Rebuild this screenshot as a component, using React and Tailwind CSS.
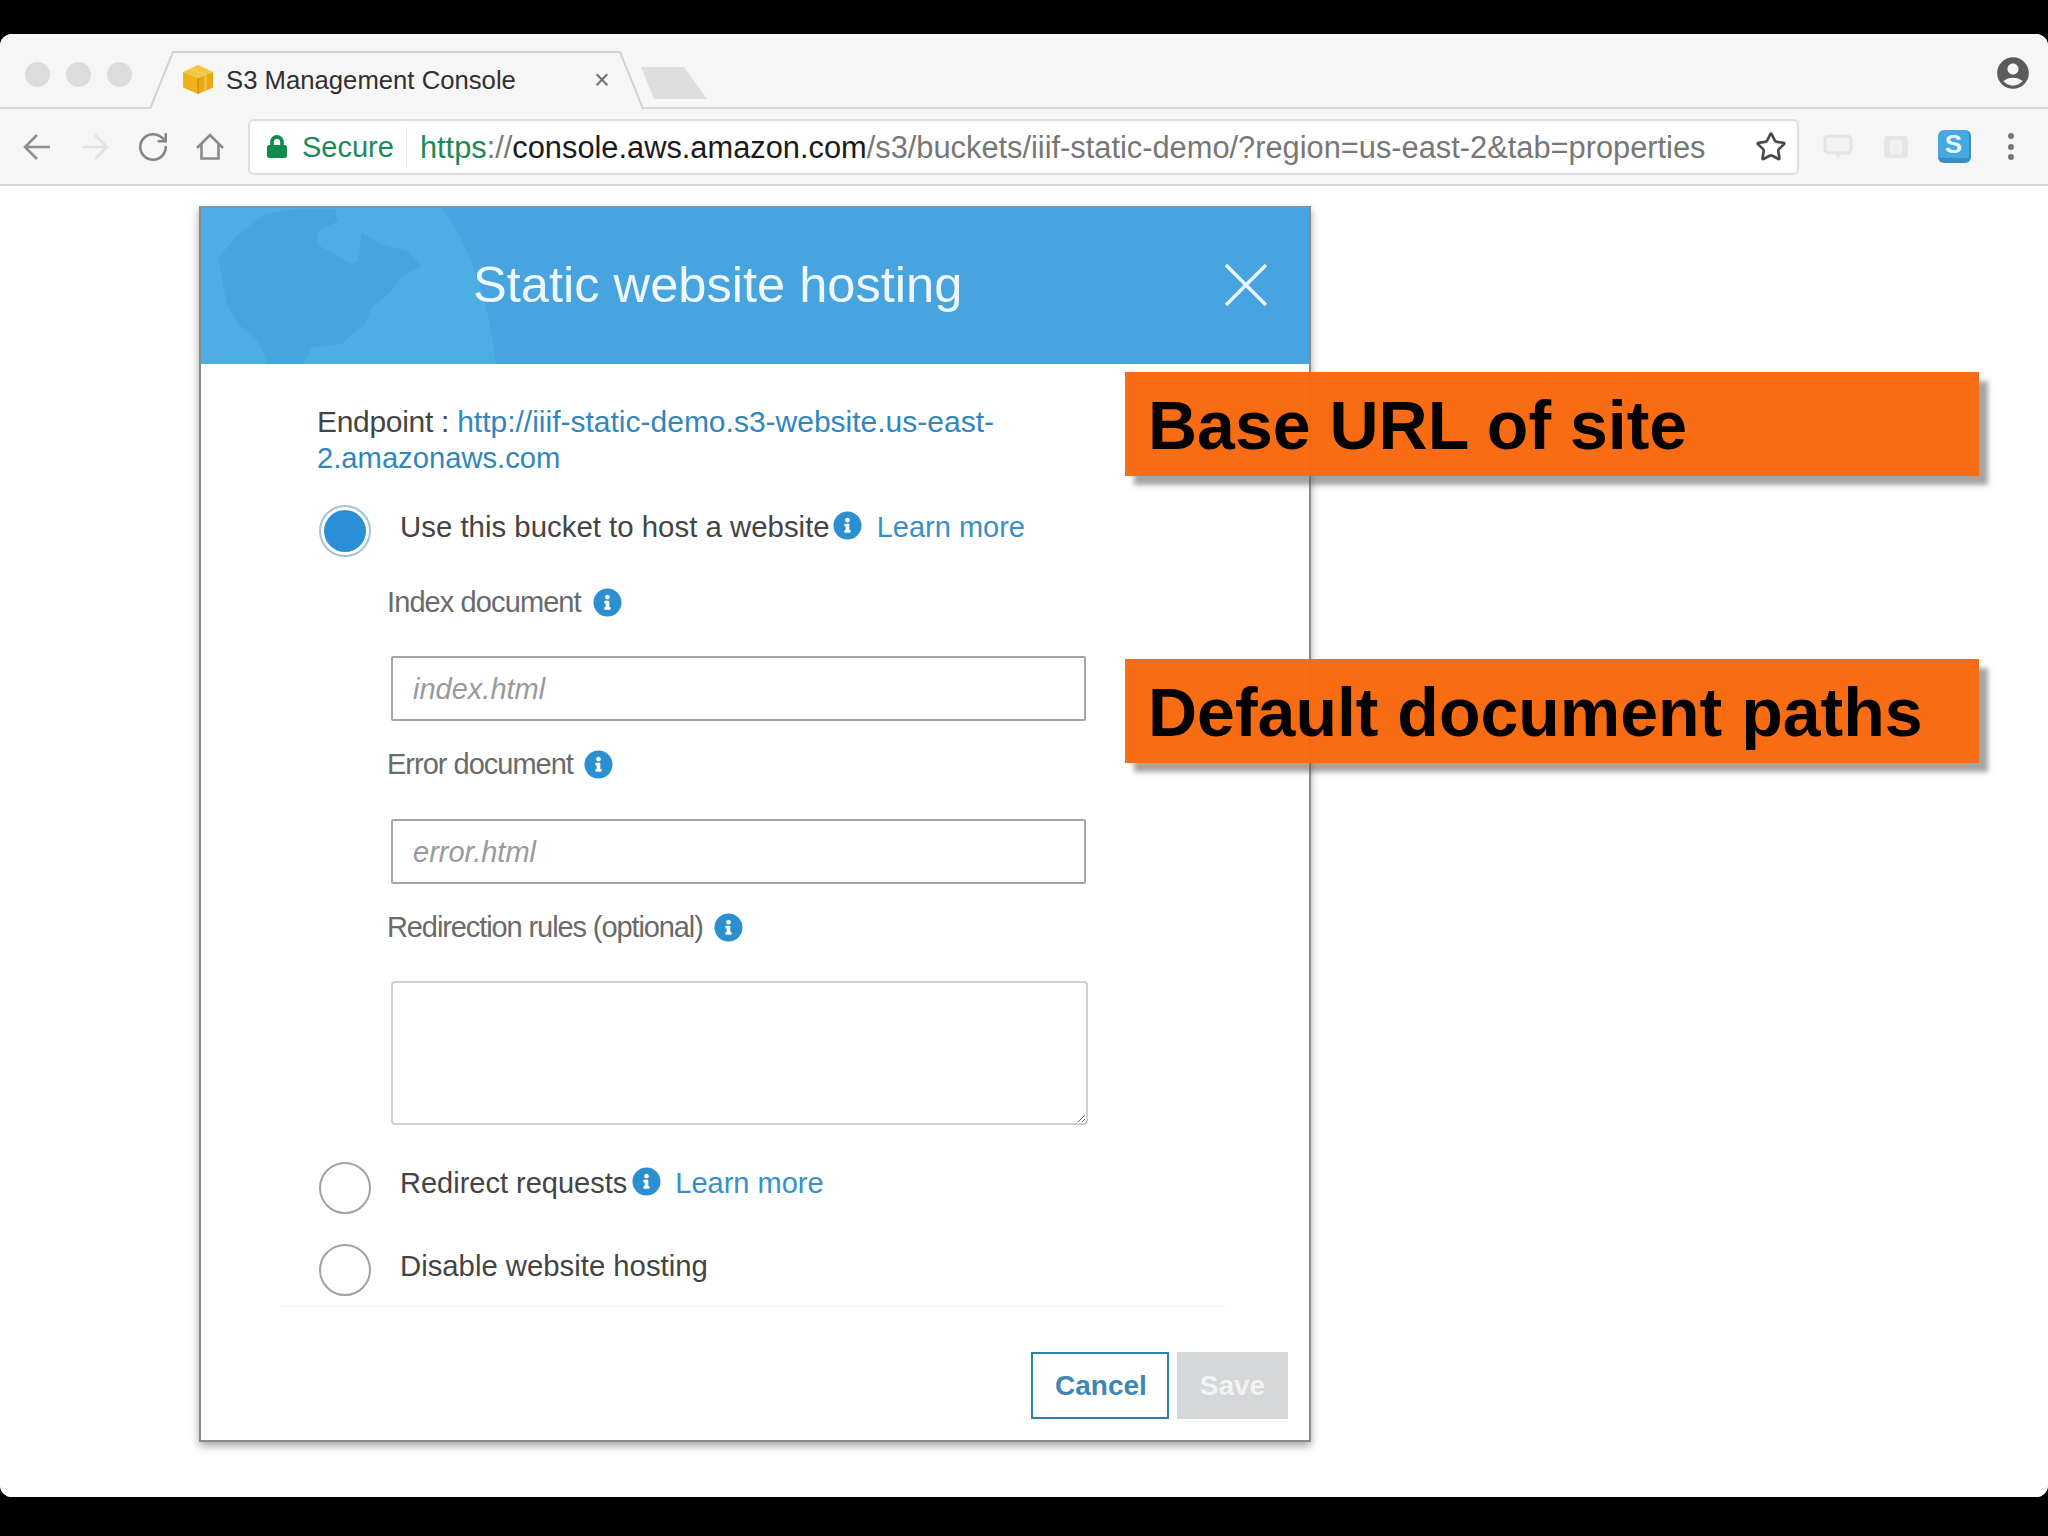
import React from "react";
import { RotateCw, Star } from "lucide-react";
import { FaInfoCircle, FaLock } from "react-icons/fa";
import { MdAccountCircle } from "react-icons/md";

function Info({ className }) {
  return <FaInfoCircle className={`text-[#2b8fd0] w-[29px] h-[29px] shrink-0 ${className || ""}`} />;
}

function Radio({ checked, className }) {
  if (checked) {
    return (
      <div className={`ml-[2px] w-[52px] h-[52px] rounded-full border-2 border-[#a8c5d8] p-[3px] shrink-0 bg-white ${className || ""}`}>
        <div className="w-full h-full rounded-full bg-[#2b8fd6]" />
      </div>
    );
  }
  return <div className={`ml-[2px] w-[52px] h-[52px] rounded-full border-2 border-[#a2a2a2] bg-white shrink-0 ${className || ""}`} />;
}

function Field({ label, labelMt, placeholder, inputMt, tracking, iconMl }) {
  return (
    <>
      <div className={`flex items-center h-[40px] ml-[70px] ${labelMt}`}>
        <span className={`text-[29px] text-[#6a6a6a] whitespace-nowrap ${tracking}`}>{label}</span>
        <Info className={`-mt-[2px] ${iconMl}`} />
      </div>
      {placeholder && (
        <input
          readOnly
          placeholder={placeholder}
          className={`block ml-[74px] w-[695px] h-[65px] border-2 border-[#a5a5a5] rounded-[2px] bg-white pl-[20px] pt-[2px] text-[29px] italic placeholder:text-[#9a9a9a] outline-none ${inputMt}`}
        />
      )}
    </>
  );
}

function Callout({ children, className }) {
  return (
    <div className={`absolute left-[1125px] w-[854px] h-[104px] bg-[#f8680b]/97 shadow-[9px_9px_5px_rgba(90,90,90,0.55)] flex items-center pl-[23px] pt-[2px] text-[68px] font-bold text-black whitespace-nowrap ${className}`}>
      {children}
    </div>
  );
}

export default function App() {
  return (
    <div className="w-[2048px] h-[1536px] bg-black pt-[34px] overflow-hidden font-['Liberation_Sans',Arial,sans-serif]">
      <div className="h-[1463px] rounded-[12px] overflow-hidden bg-white flex flex-col">
        {/* Tab strip */}
        <div className="h-[75px] bg-[#f6f6f6] border-b-2 border-[#d6d6d6] flex items-start shrink-0">
          <div className="flex gap-[16px] ml-[25px] mt-[28px]">
            <div className="w-[25px] h-[25px] rounded-full bg-[#dcdcdc]" />
            <div className="w-[25px] h-[25px] rounded-full bg-[#dcdcdc]" />
            <div className="w-[25px] h-[25px] rounded-full bg-[#dcdcdc]" />
          </div>
          <div className="relative w-[493px] h-[59px] ml-[18px] mt-[17px] flex items-center pl-[33px] shrink-0">
            <svg className="absolute left-0 top-0" width="493" height="59" viewBox="0 0 493 59">
              <path d="M0 59 L1 57 L23 1 L470 1 L492 57 L493 59 Z" fill="#f6f6f6" />
              <path d="M0 58 L23 1 L470 1 L493 58" fill="none" stroke="#d2d2d2" strokeWidth="2" />
            </svg>
            <svg className="relative -mt-[2px]" width="30" height="29" viewBox="0 0 30 29">
              <path d="M15 0 L30 7 L15 13 L0 7 Z" fill="#f3c640" />
              <path d="M0 7 L15 13 L15 29 L1 23 Q0 22.5 0 22 Z" fill="#efb31a" />
              <path d="M30 7 L15 13 L15 29 L29 23 Q30 22.5 30 22 Z" fill="#e9a90f" />
              <path d="M6 4.2 L21 10.4 L21 27 L24 25.7 L24 9.2 L9 2.8 Z" fill="#f7d15a" fillOpacity="0.55" />
              <path d="M15 13 L15 29" stroke="#cf8e0a" strokeWidth="1.4" />
            </svg>
            <span className="relative ml-[13px] text-[25.7px] text-[#303030] whitespace-nowrap">S3 Management Console</span>
            <span className="relative ml-[78px] text-[27px] text-[#707070] leading-none">×</span>
          </div>
          <svg className="-ml-[3px] mt-[33px] shrink-0" width="68" height="33" viewBox="0 0 68 33">
            <path d="M1 0 L44 0 L67 32 L14 32 Z" fill="#dedede" />
          </svg>
          <MdAccountCircle className="ml-auto mr-[16px] mt-[20px] w-[38px] h-[38px] text-[#5b5b5b]" />
        </div>

        {/* Toolbar */}
        <div className="h-[77px] bg-[#f6f6f6] border-b-2 border-[#d6d6d6] flex items-center pl-[23px] shrink-0">
          <svg width="28" height="28" viewBox="0 0 28 28" fill="none" stroke="#8f8f8f" strokeWidth="2.6">
            <path d="M27 14 H3 M14 2 L2 14 L14 26" />
          </svg>
          <svg className="ml-[30px]" width="28" height="28" viewBox="0 0 28 28" fill="none" stroke="#e3e3e3" strokeWidth="2.6">
            <path d="M1 14 H25 M14 2 L26 14 L14 26" />
          </svg>
          <RotateCw className="ml-[27px] w-[34px] h-[34px] text-[#858585]" strokeWidth={1.8} />
          <svg className="ml-[26px]" width="28" height="28" viewBox="0 0 28 28" fill="none" stroke="#8a8a8a" strokeWidth="2.6">
            <path d="M1 15 L14 2 L27 15 M5.5 11 V25.5 H22.5 V11" />
          </svg>
          <div className="ml-[24px] w-[1551px] h-[56px] bg-white border-2 border-[#dedede] rounded-[6px] flex items-center pl-[17px] pr-[10px] shrink-0">
            <FaLock className="w-[20px] h-[23px] text-[#0f8a4c]" />
            <span className="ml-[15px] pt-[2px] text-[29px] text-[#1c8a58] whitespace-nowrap">Secure</span>
            <div className="ml-[12px] w-px h-[40px] bg-[#ececec]" />
            <div className="ml-[13px] pt-[3px] text-[30.8px] text-[#777777] whitespace-nowrap">
              <span className="text-[#1c8a58]">https</span>
              <span>://</span>
              <span className="text-[#1a1a1a]">console.aws.amazon.com</span>
              <span>/s3/buckets/iiif-static-demo/?region=us-east-2&amp;tab=properties</span>
            </div>
            <Star className="ml-auto w-[32px] h-[32px] text-[#4a4a4a]" strokeWidth={2} />
          </div>
          <svg className="ml-[24px]" width="30" height="26" viewBox="0 0 30 26">
            <path d="M12 19 L15 25 L18 19 Z" fill="#e6e6e6" />
            <rect x="2" y="2" width="26" height="17" rx="4" fill="#f3f3f3" stroke="#e4e4e4" strokeWidth="3" />
          </svg>
          <svg className="ml-[30px]" width="26" height="24" viewBox="0 0 26 24">
            <rect x="1" y="1" width="24" height="22" rx="4" fill="#e6e6e6" />
            <rect x="7" y="5" width="12" height="14" rx="1.5" fill="#f2f2f2" />
          </svg>
          <div className="ml-[29px] w-[33px] h-[33px] rounded-[6px] bg-[#45a8e3] border-b-[5px] border-r-2 border-[#3b8cc0] flex items-center justify-center text-[#e8f6fc] font-bold text-[26px] leading-none">S</div>
          <div className="ml-[37px] flex flex-col gap-[4.5px]">
            <div className="w-[6px] h-[6px] rounded-full bg-[#777777]" />
            <div className="w-[6px] h-[6px] rounded-full bg-[#777777]" />
            <div className="w-[6px] h-[6px] rounded-full bg-[#777777]" />
          </div>
        </div>

        {/* Page */}
        <div className="relative flex-1 pt-[20px] pl-[199px] bg-white">
          <div className="w-[1112px] h-[1236px] border-x-2 border-b-2 border-t-2 border-x-[#8a8a8a] border-b-[#8a8a8a] border-t-[#6f9cb6] bg-white shadow-[0_4px_8px_rgba(0,0,0,0.35)] flex flex-col">
            <div className="relative h-[156px] bg-[#48a4de] flex items-center overflow-hidden shrink-0">
              <svg className="absolute -left-[6px] -top-[7px]" width="330" height="170" viewBox="0 0 990 510">
                <path d="M0 0 L720 0 C800 80 880 260 905 510 L0 510 Z" fill="#4daee3" />
                <path d="M70 170 L130 100 L210 40 L300 25 L420 25 L430 60 L370 90 L365 130 L420 160 L470 190 L490 180 L500 95 L560 130 L640 150 L680 195 L620 225 L590 270 L530 320 L510 370 L470 400 L440 430 L350 440 L325 490 L325 510 L225 510 L190 420 L130 370 L95 310 Z" fill="#47a5de" />
              </svg>
              <span className="relative ml-[272px] pb-[2px] text-[50.6px] text-[#eef8fc] whitespace-nowrap">Static website hosting</span>
              <svg className="relative ml-auto mr-[42px] -mt-[2px]" width="42" height="42" viewBox="0 0 42 42">
                <path d="M1 1 L41 41 M41 1 L1 41" stroke="#e4f5fb" strokeWidth="3.5" fill="none" />
              </svg>
            </div>

            <div className="pl-[116px] flex flex-col items-start">
              <div className="mt-[39px] text-[30px] leading-[37px] whitespace-nowrap">
                <div>
                  <span className="text-[#444444] tracking-[-0.3px]">Endpoint : </span>
                  <span className="text-[#3186bd]">http://iiif-static-demo.s3-website.us-east-</span>
                </div>
                <div className="text-[29.2px] text-[#3186bd]">2.amazonaws.com</div>
              </div>
              <div className="mt-[28px] flex items-start h-[52px]">
                <Radio checked />
                <span className="ml-[29px] text-[29.4px] leading-[44px] text-[#444444] whitespace-nowrap">Use this bucket to host a website</span>
                <Info className="ml-[3px] mt-[6px]" />
                <span className="ml-[15px] text-[29px] leading-[44px] text-[#3790c8] whitespace-nowrap">Learn more</span>
              </div>

              <Field label="Index document" labelMt="mt-[26px]" inputMt="mt-[33px]" placeholder="index.html" tracking="tracking-[-0.9px]" iconMl="ml-[12px]" />
              <Field label="Error document" labelMt="mt-[24px]" inputMt="mt-[34px]" placeholder="error.html" tracking="tracking-[-1px]" iconMl="ml-[11px]" />
              <Field label="Redirection rules (optional)" labelMt="mt-[24px]" tracking="tracking-[-1.1px]" iconMl="ml-[11px]" />
              <textarea readOnly className="block ml-[74px] mt-[33px] w-[697px] h-[144px] border-2 border-[#cfcfcf] rounded-[4px] bg-white outline-none" />

              <div className="mt-[37px] flex items-start h-[52px]">
                <Radio />
                <span className="ml-[29px] text-[29px] leading-[42px] text-[#444444] whitespace-nowrap">Redirect requests</span>
                <Info className="ml-[5px] mt-[5px]" />
                <span className="ml-[14px] text-[29px] leading-[42px] text-[#3790c8] whitespace-nowrap">Learn more</span>
              </div>
              <div className="mt-[30px] flex items-start h-[52px]">
                <Radio />
                <span className="ml-[29px] text-[29.3px] leading-[43px] text-[#444444] whitespace-nowrap">Disable website hosting</span>
              </div>
            </div>

            <div className="mt-[10px] mx-[80px] h-px bg-[#f4f4f4]" />

            <div className="mt-[45px] flex justify-end gap-[8px] pr-[21px]">
              <div className="w-[138px] h-[67px] border-2 border-[#2a84a8] bg-white flex items-center justify-center pl-[2px] text-[28px] font-bold text-[#3d87b5]">Cancel</div>
              <div className="w-[111px] h-[67px] bg-[#d5d7d8] flex items-center justify-center text-[28px] font-bold text-[#f2f4f4]">Save</div>
            </div>
          </div>

          <Callout className="top-[186px]">Base URL of site</Callout>
          <Callout className="top-[473px]">Default document paths</Callout>
        </div>
      </div>
    </div>
  );
}
